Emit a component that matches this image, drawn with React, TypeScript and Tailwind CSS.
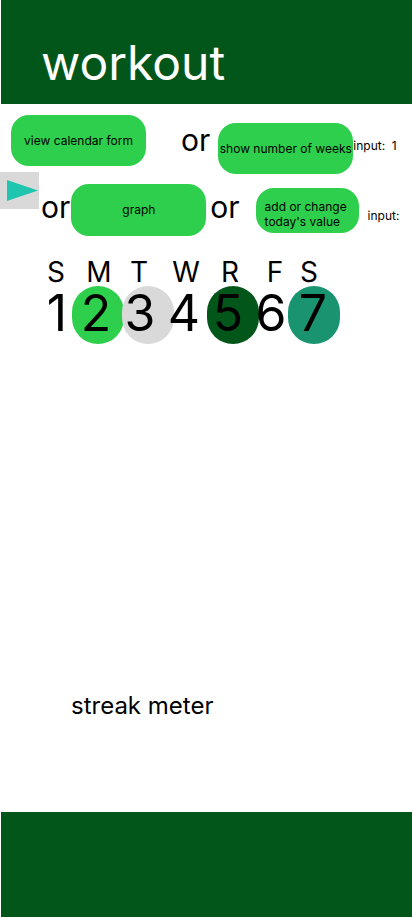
import React from "react";

const DAY_LETTERS = [
  { label: "S", ml: "ml-[36px]" },
  { label: "M", ml: "ml-[3px]" },
  { label: "T", ml: "ml-[0px]" },
  { label: "W", ml: "ml-[7px]" },
  { label: "R", ml: "ml-[4px]" },
  { label: "F", ml: "ml-[5px]" },
  { label: "S", ml: "ml-[-6px]" },
];

const DAY_NUMBERS = [
  { n: "1", ml: "ml-[37px]" },
  { n: "2", ml: "ml-[-1px]" },
  { n: "3", ml: "ml-[4px]" },
  { n: "4", ml: "ml-[4px]" },
  { n: "5", ml: "ml-[4px]" },
  { n: "6", ml: "ml-[3px]" },
  { n: "7", ml: "ml-[2px]" },
];

// circles that sit behind the numbers
const DOTS = [
  { left: "left-[72px]", color: "bg-[#2dcf4c]" },
  { left: "left-[122px]", color: "bg-[#d9d9d9]" },
  { left: "left-[207px]", color: "bg-[#03561a]" },
  { left: "left-[288px]", color: "bg-[#1a9470]" },
];

function PillButton({
  children,
  className,
}: {
  children: React.ReactNode;
  className: string;
}) {
  return (
    <button
      className={
        "shrink-0 rounded-[18px] bg-[#2dcf4c] text-black " + className
      }
    >
      {children}
    </button>
  );
}

export default function App() {
  return (
    <div className="flex min-h-[917px] w-[412px] flex-col bg-white font-['Inter',sans-serif] text-black">
      {/* Header */}
      <header className="ml-[1px] h-[104px] shrink-0 bg-[#03561a] pl-[40px] pt-[39px]">
        <h1 className="text-[48px] leading-none font-normal text-white">
          workout
        </h1>
      </header>

      <main className="flex flex-1 flex-col">
        {/* Row 1 */}
        <div className="flex items-start">
          <PillButton className="ml-[11px] mt-[11px] flex h-[51px] w-[135px] items-center justify-center whitespace-nowrap text-[12px] leading-none">
            view calendar form
          </PillButton>
          <span className="ml-[35px] mt-[21px] text-[30px] leading-none">or</span>
          <PillButton className="ml-[8px] mt-[19px] flex h-[51px] w-[135px] items-center justify-center whitespace-nowrap text-[12px] leading-none">
            show number of weeks
          </PillButton>
          <span className="mt-[36px] whitespace-pre text-[12px] leading-none">
            {"input:  1"}
          </span>
        </div>

        {/* Row 2 */}
        <div className="-mt-[2px] flex items-start">
          <div className="h-[37px] w-[39px] shrink-0 bg-[#d9d9d9]">
            <svg width="39" height="37" viewBox="0 0 39 37">
              <polygon points="7,8 38,18.5 7,29" fill="#20c5b0" />
            </svg>
          </div>
          <span className="ml-[2px] mt-[20px] text-[30px] leading-none">or</span>
          <PillButton className="ml-[1px] mt-[12px] flex h-[52px] w-[135px] items-center justify-center text-[12px] leading-none">
            graph
          </PillButton>
          <span className="ml-[4px] mt-[20px] text-[30px] leading-none">or</span>
          <PillButton className="ml-[16px] mt-[16px] h-[45px] w-[103px] pl-[9px] pt-[8px] text-left text-[12px] leading-[14.5px]">
            add or change
            <br />
            today's value
          </PillButton>
          <span className="ml-[9px] mt-[38px] text-[12px] leading-none">
            input:
          </span>
        </div>

        {/* Week */}
        <div className="mt-[22px] flex text-[28px] leading-none">
          {DAY_LETTERS.map((d, i) => (
            <span key={i} className={"w-[40px] shrink-0 text-center " + d.ml}>
              {d.label}
            </span>
          ))}
        </div>
        <div className="relative h-[58px]">
          {DOTS.map((d, i) => (
            <span
              key={i}
              className={
                "absolute top-0 h-[58px] w-[52px] rounded-full " +
                d.left +
                " " +
                d.color
              }
            />
          ))}
          <div className="relative flex pt-[2px] text-[50px] leading-none">
            {DAY_NUMBERS.map((d, i) => (
              <span key={i} className={"w-[40px] shrink-0 text-center " + d.ml}>
                {d.n}
              </span>
            ))}
          </div>
        </div>

        <p className="mt-auto mb-[94px] ml-[71px] text-[24px] leading-[24px]">
          streak meter
        </p>
      </main>

      {/* Footer */}
      <footer className="ml-[1px] h-[105px] shrink-0 bg-[#03561a]" />
    </div>
  );
}
